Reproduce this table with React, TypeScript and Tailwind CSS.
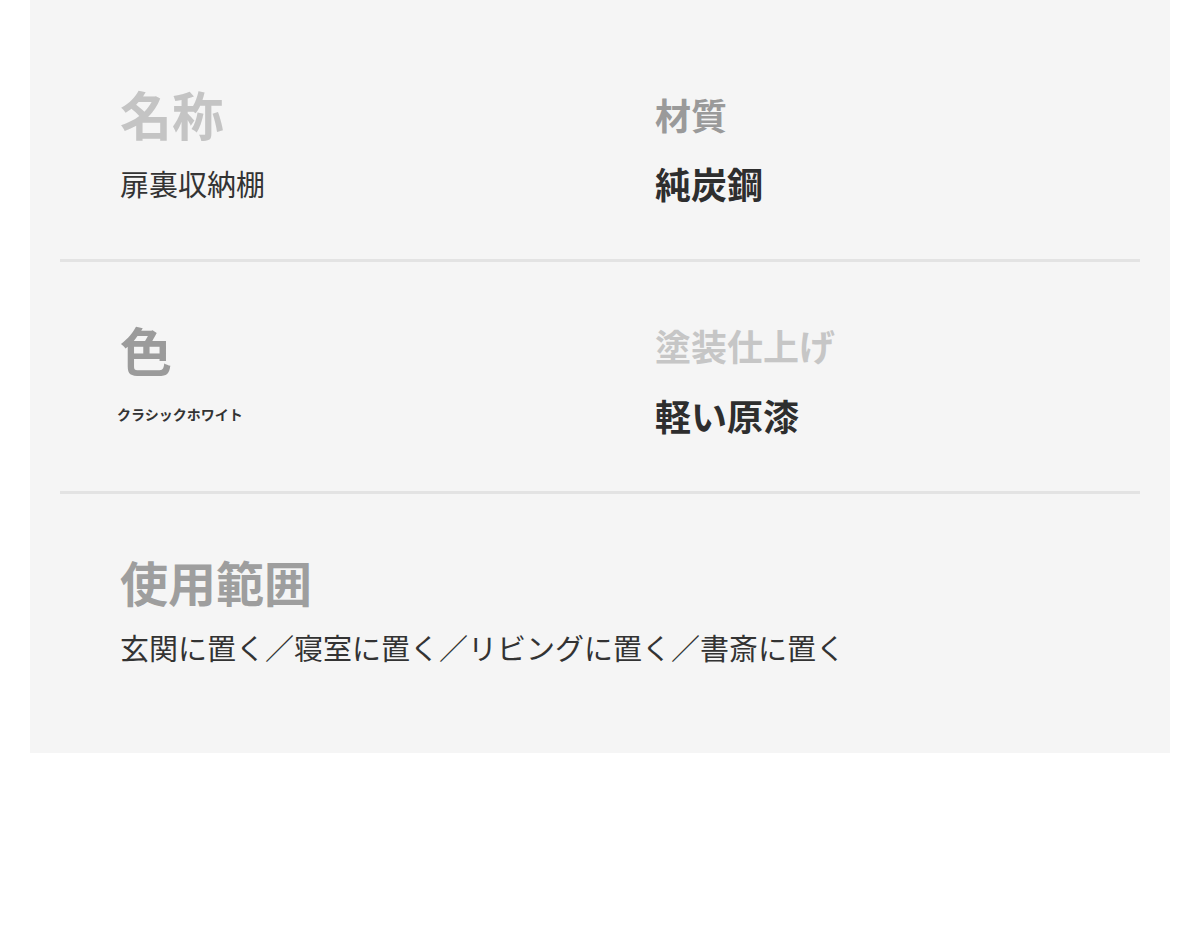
const jp = '"Noto Sans CJK JP", "Noto Sans", sans-serif';

function Divider() {
  return <div className="mx-[30px] h-[3px] bg-[#e3e3e3]" />;
}

export default function App() {
  return (
    <div className="min-h-[930px] bg-white" style={{ fontFamily: jp }}>
      <div className="mx-[30px] h-[753px] bg-[#f5f5f5] flex flex-col">
        {/* 名称 / 材質 */}
        <div className="h-[259px] grid grid-cols-[535px_1fr] pl-[90px]">
          <div className="flex flex-col pt-[88px]">
            <div className="text-[52px] leading-none font-bold text-[#c4c4c4]">名称</div>
            <div className="mt-[29px] text-[29px] leading-none text-[#333]">扉裏収納棚</div>
          </div>
          <div className="flex flex-col pt-[96px]">
            <div className="text-[36px] leading-none font-bold text-[#9a9a9a]">材質</div>
            <div className="mt-[33px] text-[36px] leading-none font-bold text-[#2e2e2e]">純炭鋼</div>
          </div>
        </div>
        <Divider />
        {/* 色 / 塗装仕上げ */}
        <div className="h-[229px] grid grid-cols-[535px_1fr] pl-[90px]">
          <div className="flex flex-col pt-[62px]">
            <div className="text-[52px] leading-none font-bold text-[#9b9b9b]">色</div>
            <div className="mt-[31px] -ml-[3px] text-[14px] leading-none font-bold text-[#333]">クラシックホワイト</div>
          </div>
          <div className="flex flex-col pt-[65px]">
            <div className="text-[36px] leading-none font-bold text-[#c6c6c6]">塗装仕上げ</div>
            <div className="mt-[34px] text-[36px] leading-none font-bold text-[#2e2e2e]">軽い原漆</div>
          </div>
        </div>
        <Divider />
        {/* 使用範囲 */}
        <div className="flex-1 flex flex-col pl-[90px] pt-[63px]">
          <div className="text-[48px] leading-none font-bold text-[#9e9e9e]">使用範囲</div>
          <div className="mt-[28px] text-[29px] leading-none text-[#333]">
            玄関に置く／寝室に置く／リビングに置く／書斎に置く
          </div>
        </div>
      </div>
    </div>
  );
}
